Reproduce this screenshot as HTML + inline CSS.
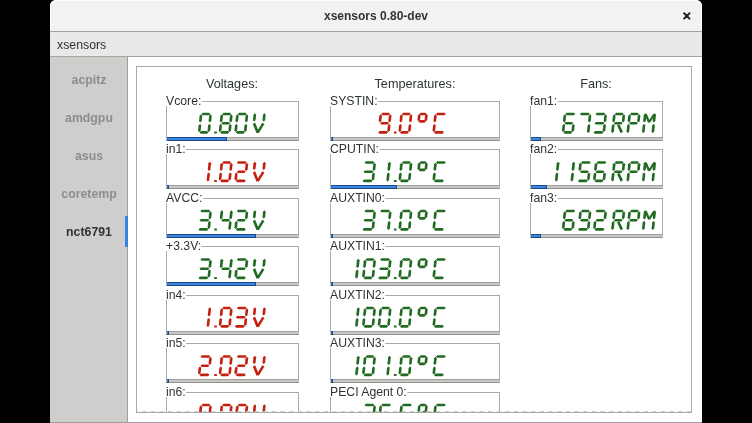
<!DOCTYPE html>
<html><head><meta charset="utf-8"><style>
html,body{margin:0;padding:0;width:752px;height:423px;overflow:hidden;background:#000;font-family:"Liberation Sans",sans-serif;}
.win{will-change:transform;position:absolute;left:50px;top:0;width:652px;height:423px;background:#fff;border-radius:6px 6px 0 0;overflow:hidden;}
.title{position:absolute;left:0;top:0;width:652px;height:31px;background:#f2f2f2;border-bottom:1px solid #a2a29f;box-shadow:inset 1px 0 #fff,inset -1px 0 #fff,inset 0 1px #fff;border-radius:6px 6px 0 0;}
.title .t{position:absolute;left:0;width:652px;top:9px;text-align:center;font-weight:bold;font-size:12px;color:#2e3436;}
.title .x{position:absolute;left:632px;top:12px;width:8px;height:8px;}
.menu{position:absolute;left:0;top:32px;width:652px;height:24px;background:#e8e8e7;border-bottom:1px solid #a5a5a2;}
.menu .t{position:absolute;left:7px;top:5.3px;font-size:13.6px;color:#2e3436;transform:scaleX(0.905);transform-origin:0 0;}
.side{position:absolute;left:0;top:57px;width:77px;height:366px;background:#cececc;border-right:1px solid #9f9f9c;}
.side .it{position:absolute;left:0;width:78px;text-align:center;font-weight:bold;font-size:12.3px;color:#8b8e8f;}
.side .sel{color:#2e3436;}
.side .ind{position:absolute;left:75px;top:159px;width:3px;height:31px;background:#3584e4;}
.content{position:absolute;left:136px;top:66px;width:554px;height:345px;border:1px solid #a8a8a5;overflow:hidden;background:#fff;}
.fr{position:absolute;height:38px;border:1px solid #a9a9a6;}
.lb{position:absolute;left:-1px;top:-5.9px;background:#fff;font-size:12.8px;color:#2e3436;padding-right:0.6px;line-height:10.5px;height:10.1px;transform:scaleX(0.955);transform-origin:0 0;}
.bar{position:absolute;left:-1px;right:-1px;bottom:-1px;height:4px;background:#c8c8c5;box-shadow:inset 0 1px #a0a09c, inset 0 -1px #92928e;border-radius:0 0 1px 1px;}
.fill{position:absolute;left:1px;top:0;height:4px;background:#3a88e2;box-shadow:inset 0 1px #174a90, inset 0 -1px #1d4778, inset -1px 0 #174a90;border-radius:1px;}
.hd{position:absolute;font-size:12.8px;color:#2e3436;top:76px;width:200px;text-align:center;transform:scaleX(0.99);}
.dash{position:absolute;left:137px;top:411px;width:554px;height:1px;background:repeating-linear-gradient(to right,#fff 0,#fff 4.3px,#c8c8c8 4.3px,#c8c8c8 8.67px);}
.bottom{position:absolute;left:50px;top:422px;width:652px;height:1px;background:#a0a09e;}
</style></head><body>
<div class="win">
 <div class="title"><div class="t">xsensors 0.80-dev</div>
  <svg viewBox="0 0 10 10" style="left:631.5px;top:10.5px;width:10px;height:10px;position:absolute"><path d="M2.1 2.2L7.5 7.6M7.5 2.2L2.1 7.6" stroke="#1f2324" stroke-width="2" stroke-linecap="round"/></svg>
 </div>
 <div class="menu"><div class="t">xsensors</div></div>
 <div class="side">
  <div class="it" style="top:16px">acpitz</div>
  <div class="it" style="top:54px">amdgpu</div>
  <div class="it" style="top:92px">asus</div>
  <div class="it" style="top:130px">coretemp</div>
  <div class="it sel" style="top:168px">nct6791</div>
  <div class="ind"></div>
 </div>
</div>
<div style="position:absolute;left:0;top:0;width:752px;height:423px;will-change:transform;">
 <div style="position:absolute;left:137px;top:67px;width:554px;height:345px;overflow:hidden;">
  <div style="position:absolute;left:-137px;top:-67px;width:752px;height:423px;">
   <div class="hd" style="left:132.3px">Voltages:</div>
   <div class="hd" style="left:314.5px">Temperatures:</div>
   <div class="hd" style="left:496.4px">Fans:</div>
   <div class="fr" style="left:166px;top:101px;width:131px"><span class="lb">Vcore:</span><div class="bar"><div class="fill" style="width:59.5px"></div></div></div><div class="fr" style="left:166px;top:149px;width:131px"><span class="lb">in1:</span><div class="bar"><div class="fill" style="width:2.0px"></div></div></div><div class="fr" style="left:166px;top:198px;width:131px"><span class="lb">AVCC:</span><div class="bar"><div class="fill" style="width:89.4px"></div></div></div><div class="fr" style="left:166px;top:246px;width:131px"><span class="lb">+3.3V:</span><div class="bar"><div class="fill" style="width:89.4px"></div></div></div><div class="fr" style="left:166px;top:295px;width:131px"><span class="lb">in4:</span><div class="bar"><div class="fill" style="width:2.0px"></div></div></div><div class="fr" style="left:166px;top:343px;width:131px"><span class="lb">in5:</span><div class="bar"><div class="fill" style="width:2.0px"></div></div></div><div class="fr" style="left:166px;top:392px;width:131px"><span class="lb">in6:</span><div class="bar"><div class="fill" style="width:2.0px"></div></div></div><div class="fr" style="left:330px;top:101px;width:168px"><span class="lb">SYSTIN:</span><div class="bar"><div class="fill" style="width:2.0px"></div></div></div><div class="fr" style="left:330px;top:149px;width:168px"><span class="lb">CPUTIN:</span><div class="bar"><div class="fill" style="width:65.5px"></div></div></div><div class="fr" style="left:330px;top:198px;width:168px"><span class="lb">AUXTIN0:</span><div class="bar"><div class="fill" style="width:2.0px"></div></div></div><div class="fr" style="left:330px;top:246px;width:168px"><span class="lb">AUXTIN1:</span><div class="bar"><div class="fill" style="width:2.0px"></div></div></div><div class="fr" style="left:330px;top:295px;width:168px"><span class="lb">AUXTIN2:</span><div class="bar"><div class="fill" style="width:2.0px"></div></div></div><div class="fr" style="left:330px;top:343px;width:168px"><span class="lb">AUXTIN3:</span><div class="bar"><div class="fill" style="width:2.0px"></div></div></div><div class="fr" style="left:330px;top:392px;width:168px"><span class="lb">PECI Agent 0:</span><div class="bar"><div class="fill" style="width:2.0px"></div></div></div><div class="fr" style="left:530px;top:101px;width:131px"><span class="lb">fan1:</span><div class="bar"><div class="fill" style="width:9.9px"></div></div></div><div class="fr" style="left:530px;top:149px;width:131px"><span class="lb">fan2:</span><div class="bar"><div class="fill" style="width:15.7px"></div></div></div><div class="fr" style="left:530px;top:198px;width:131px"><span class="lb">fan3:</span><div class="bar"><div class="fill" style="width:9.8px"></div></div></div>
   <svg style="position:absolute;left:0;top:0" width="752" height="423"><g fill="#226a22"><polygon points="254.96,113.35 256.15,114.67 255.56,120.28 254.10,121.60 252.91,120.28 253.50,114.67"/><polygon points="264.51,113.35 265.70,114.67 265.11,120.28 263.65,121.60 262.46,120.28 263.05,114.67"/><polygon points="252.82,123.97 256.53,133.17 258.90,132.03 255.19,122.83"/><polygon points="262.29,122.83 256.65,132.03 258.78,133.17 264.42,123.97"/><polygon points="237.82,114.03 239.28,112.70 245.53,112.70 246.72,114.03 245.25,115.35 239.00,115.35"/><polygon points="235.89,132.38 237.35,131.05 243.60,131.05 244.79,132.38 243.33,133.70 237.08,133.70"/><polygon points="237.46,114.35 238.64,115.67 238.08,121.08 236.61,122.40 235.43,121.08 235.99,115.67"/><polygon points="236.44,124.00 237.63,125.33 237.06,130.72 235.60,132.05 234.41,130.72 234.98,125.33"/><polygon points="247.01,114.35 248.19,115.67 247.63,121.08 246.16,122.40 244.98,121.08 245.54,115.67"/><polygon points="245.99,124.00 247.18,125.33 246.61,130.72 245.15,132.05 243.96,130.72 244.53,125.33"/><polygon points="222.22,114.03 223.68,112.70 229.93,112.70 231.12,114.03 229.65,115.35 223.40,115.35"/><polygon points="221.25,123.20 222.72,121.88 228.97,121.88 230.15,123.20 228.69,124.53 222.44,124.53"/><polygon points="220.29,132.38 221.75,131.05 228.00,131.05 229.19,132.38 227.73,133.70 221.48,133.70"/><polygon points="221.86,114.35 223.04,115.67 222.48,121.08 221.01,122.40 219.83,121.08 220.39,115.67"/><polygon points="220.84,124.00 222.03,125.33 221.46,130.72 220.00,132.05 218.81,130.72 219.38,125.33"/><polygon points="231.41,114.35 232.59,115.67 232.03,121.08 230.56,122.40 229.38,121.08 229.94,115.67"/><polygon points="230.39,124.00 231.58,125.33 231.01,130.72 229.55,132.05 228.36,130.72 228.93,125.33"/><rect x="214.20" y="131.40" width="2.7" height="2.2" rx="0.4" fill="#226a22"/><polygon points="201.42,114.03 202.88,112.70 209.13,112.70 210.32,114.03 208.85,115.35 202.60,115.35"/><polygon points="199.49,132.38 200.95,131.05 207.20,131.05 208.39,132.38 206.93,133.70 200.68,133.70"/><polygon points="201.06,114.35 202.24,115.67 201.68,121.08 200.21,122.40 199.03,121.08 199.59,115.67"/><polygon points="200.04,124.00 201.23,125.33 200.66,130.72 199.20,132.05 198.01,130.72 198.58,125.33"/><polygon points="210.61,114.35 211.79,115.67 211.23,121.08 209.76,122.40 208.58,121.08 209.14,115.67"/><polygon points="209.59,124.00 210.78,125.33 210.21,130.72 208.75,132.05 207.56,130.72 208.13,125.33"/></g><g fill="#c42010"><polygon points="254.96,161.85 256.15,163.17 255.56,168.77 254.10,170.10 252.91,168.77 253.50,163.17"/><polygon points="264.51,161.85 265.70,163.17 265.11,168.77 263.65,170.10 262.46,168.77 263.05,163.17"/><polygon points="252.82,172.47 256.53,181.67 258.90,180.53 255.19,171.33"/><polygon points="262.29,171.33 256.65,180.53 258.78,181.67 264.42,172.47"/><polygon points="236.82,162.52 238.28,161.20 245.53,161.20 246.72,162.52 245.25,163.85 238.00,163.85"/><polygon points="236.85,171.70 238.32,170.38 244.57,170.38 245.75,171.70 244.29,173.02 238.04,173.02"/><polygon points="235.89,180.88 237.35,179.55 244.60,179.55 245.79,180.88 244.33,182.20 237.08,182.20"/><polygon points="236.44,172.50 237.63,173.82 237.06,179.22 235.60,180.55 234.41,179.22 234.98,173.82"/><polygon points="247.01,162.85 248.19,164.17 247.63,169.57 246.16,170.90 244.98,169.57 245.54,164.17"/><polygon points="222.22,162.52 223.68,161.20 229.93,161.20 231.12,162.52 229.65,163.85 223.40,163.85"/><polygon points="220.29,180.88 221.75,179.55 228.00,179.55 229.19,180.88 227.73,182.20 221.48,182.20"/><polygon points="221.86,162.85 223.04,164.17 222.48,169.57 221.01,170.90 219.83,169.57 220.39,164.17"/><polygon points="220.84,172.50 222.03,173.82 221.46,179.22 220.00,180.55 218.81,179.22 219.38,173.82"/><polygon points="231.41,162.85 232.59,164.17 232.03,169.57 230.56,170.90 229.38,169.57 229.94,164.17"/><polygon points="230.39,172.50 231.58,173.82 231.01,179.22 229.55,180.55 228.36,179.22 228.93,173.82"/><rect x="214.20" y="179.90" width="2.7" height="2.2" rx="0.4" fill="#c42010"/><polygon points="209.91,161.85 211.10,163.17 210.43,169.57 208.96,170.90 207.78,169.57 208.45,163.17"/><polygon points="208.79,172.50 209.98,173.82 209.31,180.22 207.84,181.55 206.66,180.22 207.33,173.82"/></g><g fill="#226a22"><polygon points="254.96,210.35 256.15,211.67 255.56,217.27 254.10,218.60 252.91,217.27 253.50,211.67"/><polygon points="264.51,210.35 265.70,211.67 265.11,217.27 263.65,218.60 262.46,217.27 263.05,211.67"/><polygon points="252.82,220.97 256.53,230.17 258.90,229.03 255.19,219.83"/><polygon points="262.29,219.83 256.65,229.03 258.78,230.17 264.42,220.97"/><polygon points="236.82,211.02 238.28,209.70 245.53,209.70 246.72,211.02 245.25,212.35 238.00,212.35"/><polygon points="236.85,220.20 238.32,218.88 244.57,218.88 245.75,220.20 244.29,221.52 238.04,221.52"/><polygon points="235.89,229.38 237.35,228.05 244.60,228.05 245.79,229.38 244.33,230.70 237.08,230.70"/><polygon points="236.44,221.00 237.63,222.32 237.06,227.72 235.60,229.05 234.41,227.72 234.98,222.32"/><polygon points="247.01,211.35 248.19,212.67 247.63,218.07 246.16,219.40 244.98,218.07 245.54,212.67"/><polygon points="221.25,220.20 222.72,218.88 228.97,218.88 230.15,220.20 228.69,221.52 222.44,221.52"/><polygon points="221.96,210.35 223.15,211.67 222.48,218.07 221.01,219.40 219.83,218.07 220.50,211.67"/><polygon points="231.51,210.35 232.70,211.67 232.03,218.07 230.56,219.40 229.38,218.07 230.05,211.67"/><polygon points="230.39,221.00 231.58,222.32 230.91,228.72 229.44,230.05 228.26,228.72 228.93,222.32"/><rect x="214.20" y="228.40" width="2.7" height="2.2" rx="0.4" fill="#226a22"/><polygon points="200.42,211.02 201.88,209.70 209.13,209.70 210.32,211.02 208.85,212.35 201.60,212.35"/><polygon points="199.45,220.20 200.92,218.88 208.17,218.88 209.35,220.20 207.89,221.52 200.64,221.52"/><polygon points="198.49,229.38 199.95,228.05 207.20,228.05 208.39,229.38 206.93,230.70 199.68,230.70"/><polygon points="210.61,211.35 211.79,212.67 211.23,218.07 209.76,219.40 208.58,218.07 209.14,212.67"/><polygon points="209.59,221.00 210.78,222.32 210.21,227.72 208.75,229.05 207.56,227.72 208.13,222.32"/></g><g fill="#226a22"><polygon points="254.96,258.85 256.15,260.18 255.56,265.77 254.10,267.10 252.91,265.77 253.50,260.18"/><polygon points="264.51,258.85 265.70,260.18 265.11,265.77 263.65,267.10 262.46,265.77 263.05,260.18"/><polygon points="252.82,269.47 256.53,278.67 258.90,277.53 255.19,268.33"/><polygon points="262.29,268.33 256.65,277.53 258.78,278.67 264.42,269.47"/><polygon points="236.82,259.52 238.28,258.20 245.53,258.20 246.72,259.52 245.25,260.85 238.00,260.85"/><polygon points="236.85,268.70 238.32,267.38 244.57,267.38 245.75,268.70 244.29,270.02 238.04,270.02"/><polygon points="235.89,277.88 237.35,276.55 244.60,276.55 245.79,277.88 244.33,279.20 237.08,279.20"/><polygon points="236.44,269.50 237.63,270.82 237.06,276.22 235.60,277.55 234.41,276.22 234.98,270.82"/><polygon points="247.01,259.85 248.19,261.18 247.63,266.57 246.16,267.90 244.98,266.57 245.54,261.18"/><polygon points="221.25,268.70 222.72,267.38 228.97,267.38 230.15,268.70 228.69,270.02 222.44,270.02"/><polygon points="221.96,258.85 223.15,260.18 222.48,266.57 221.01,267.90 219.83,266.57 220.50,260.18"/><polygon points="231.51,258.85 232.70,260.18 232.03,266.57 230.56,267.90 229.38,266.57 230.05,260.18"/><polygon points="230.39,269.50 231.58,270.82 230.91,277.22 229.44,278.55 228.26,277.22 228.93,270.82"/><rect x="214.20" y="276.90" width="2.7" height="2.2" rx="0.4" fill="#226a22"/><polygon points="200.42,259.52 201.88,258.20 209.13,258.20 210.32,259.52 208.85,260.85 201.60,260.85"/><polygon points="199.45,268.70 200.92,267.38 208.17,267.38 209.35,268.70 207.89,270.02 200.64,270.02"/><polygon points="198.49,277.88 199.95,276.55 207.20,276.55 208.39,277.88 206.93,279.20 199.68,279.20"/><polygon points="210.61,259.85 211.79,261.18 211.23,266.57 209.76,267.90 208.58,266.57 209.14,261.18"/><polygon points="209.59,269.50 210.78,270.82 210.21,276.22 208.75,277.55 207.56,276.22 208.13,270.82"/></g><g fill="#c42010"><polygon points="254.96,307.35 256.15,308.68 255.56,314.27 254.10,315.60 252.91,314.27 253.50,308.68"/><polygon points="264.51,307.35 265.70,308.68 265.11,314.27 263.65,315.60 262.46,314.27 263.05,308.68"/><polygon points="252.82,317.97 256.53,327.17 258.90,326.03 255.19,316.83"/><polygon points="262.29,316.83 256.65,326.03 258.78,327.17 264.42,317.97"/><polygon points="236.82,308.02 238.28,306.70 245.53,306.70 246.72,308.02 245.25,309.35 238.00,309.35"/><polygon points="235.85,317.20 237.32,315.88 244.57,315.88 245.75,317.20 244.29,318.52 237.04,318.52"/><polygon points="234.89,326.38 236.35,325.05 243.60,325.05 244.79,326.38 243.33,327.70 236.08,327.70"/><polygon points="247.01,308.35 248.19,309.68 247.63,315.07 246.16,316.40 244.98,315.07 245.54,309.68"/><polygon points="245.99,318.00 247.18,319.32 246.61,324.72 245.15,326.05 243.96,324.72 244.53,319.32"/><polygon points="222.22,308.02 223.68,306.70 229.93,306.70 231.12,308.02 229.65,309.35 223.40,309.35"/><polygon points="220.29,326.38 221.75,325.05 228.00,325.05 229.19,326.38 227.73,327.70 221.48,327.70"/><polygon points="221.86,308.35 223.04,309.68 222.48,315.07 221.01,316.40 219.83,315.07 220.39,309.68"/><polygon points="220.84,318.00 222.03,319.32 221.46,324.72 220.00,326.05 218.81,324.72 219.38,319.32"/><polygon points="231.41,308.35 232.59,309.68 232.03,315.07 230.56,316.40 229.38,315.07 229.94,309.68"/><polygon points="230.39,318.00 231.58,319.32 231.01,324.72 229.55,326.05 228.36,324.72 228.93,319.32"/><rect x="214.20" y="325.40" width="2.7" height="2.2" rx="0.4" fill="#c42010"/><polygon points="209.91,307.35 211.10,308.68 210.43,315.07 208.96,316.40 207.78,315.07 208.45,308.68"/><polygon points="208.79,318.00 209.98,319.32 209.31,325.72 207.84,327.05 206.66,325.72 207.33,319.32"/></g><g fill="#c42010"><polygon points="254.96,355.85 256.15,357.18 255.56,362.77 254.10,364.10 252.91,362.77 253.50,357.18"/><polygon points="264.51,355.85 265.70,357.18 265.11,362.77 263.65,364.10 262.46,362.77 263.05,357.18"/><polygon points="252.82,366.47 256.53,375.67 258.90,374.53 255.19,365.33"/><polygon points="262.29,365.33 256.65,374.53 258.78,375.67 264.42,366.47"/><polygon points="236.82,356.52 238.28,355.20 245.53,355.20 246.72,356.52 245.25,357.85 238.00,357.85"/><polygon points="236.85,365.70 238.32,364.38 244.57,364.38 245.75,365.70 244.29,367.02 238.04,367.02"/><polygon points="235.89,374.88 237.35,373.55 244.60,373.55 245.79,374.88 244.33,376.20 237.08,376.20"/><polygon points="236.44,366.50 237.63,367.82 237.06,373.22 235.60,374.55 234.41,373.22 234.98,367.82"/><polygon points="247.01,356.85 248.19,358.18 247.63,363.57 246.16,364.90 244.98,363.57 245.54,358.18"/><polygon points="222.22,356.52 223.68,355.20 229.93,355.20 231.12,356.52 229.65,357.85 223.40,357.85"/><polygon points="220.29,374.88 221.75,373.55 228.00,373.55 229.19,374.88 227.73,376.20 221.48,376.20"/><polygon points="221.86,356.85 223.04,358.18 222.48,363.57 221.01,364.90 219.83,363.57 220.39,358.18"/><polygon points="220.84,366.50 222.03,367.82 221.46,373.22 220.00,374.55 218.81,373.22 219.38,367.82"/><polygon points="231.41,356.85 232.59,358.18 232.03,363.57 230.56,364.90 229.38,363.57 229.94,358.18"/><polygon points="230.39,366.50 231.58,367.82 231.01,373.22 229.55,374.55 228.36,373.22 228.93,367.82"/><rect x="214.20" y="373.90" width="2.7" height="2.2" rx="0.4" fill="#c42010"/><polygon points="200.42,356.52 201.88,355.20 209.13,355.20 210.32,356.52 208.85,357.85 201.60,357.85"/><polygon points="200.45,365.70 201.92,364.38 208.17,364.38 209.35,365.70 207.89,367.02 201.64,367.02"/><polygon points="199.49,374.88 200.95,373.55 208.20,373.55 209.39,374.88 207.93,376.20 200.68,376.20"/><polygon points="200.04,366.50 201.23,367.82 200.66,373.22 199.20,374.55 198.01,373.22 198.58,367.82"/><polygon points="210.61,356.85 211.79,358.18 211.23,363.57 209.76,364.90 208.58,363.57 209.14,358.18"/></g><g fill="#c42010"><polygon points="254.96,404.35 256.15,405.68 255.56,411.27 254.10,412.60 252.91,411.27 253.50,405.68"/><polygon points="264.51,404.35 265.70,405.68 265.11,411.27 263.65,412.60 262.46,411.27 263.05,405.68"/><polygon points="252.82,414.97 256.53,424.17 258.90,423.03 255.19,413.83"/><polygon points="262.29,413.83 256.65,423.03 258.78,424.17 264.42,414.97"/><polygon points="237.82,405.02 239.28,403.70 245.53,403.70 246.72,405.02 245.25,406.35 239.00,406.35"/><polygon points="235.89,423.38 237.35,422.05 243.60,422.05 244.79,423.38 243.33,424.70 237.08,424.70"/><polygon points="237.46,405.35 238.64,406.68 238.08,412.07 236.61,413.40 235.43,412.07 235.99,406.68"/><polygon points="236.44,415.00 237.63,416.32 237.06,421.72 235.60,423.05 234.41,421.72 234.98,416.32"/><polygon points="247.01,405.35 248.19,406.68 247.63,412.07 246.16,413.40 244.98,412.07 245.54,406.68"/><polygon points="245.99,415.00 247.18,416.32 246.61,421.72 245.15,423.05 243.96,421.72 244.53,416.32"/><polygon points="222.22,405.02 223.68,403.70 229.93,403.70 231.12,405.02 229.65,406.35 223.40,406.35"/><polygon points="220.29,423.38 221.75,422.05 228.00,422.05 229.19,423.38 227.73,424.70 221.48,424.70"/><polygon points="221.86,405.35 223.04,406.68 222.48,412.07 221.01,413.40 219.83,412.07 220.39,406.68"/><polygon points="220.84,415.00 222.03,416.32 221.46,421.72 220.00,423.05 218.81,421.72 219.38,416.32"/><polygon points="231.41,405.35 232.59,406.68 232.03,412.07 230.56,413.40 229.38,412.07 229.94,406.68"/><polygon points="230.39,415.00 231.58,416.32 231.01,421.72 229.55,423.05 228.36,421.72 228.93,416.32"/><rect x="214.20" y="422.40" width="2.7" height="2.2" rx="0.4" fill="#c42010"/><polygon points="201.42,405.02 202.88,403.70 209.13,403.70 210.32,405.02 208.85,406.35 202.60,406.35"/><polygon points="199.49,423.38 200.95,422.05 207.20,422.05 208.39,423.38 206.93,424.70 200.68,424.70"/><polygon points="201.06,405.35 202.24,406.68 201.68,412.07 200.21,413.40 199.03,412.07 199.59,406.68"/><polygon points="200.04,415.00 201.23,416.32 200.66,421.72 199.20,423.05 198.01,421.72 198.58,416.32"/><polygon points="210.61,405.35 211.79,406.68 211.23,412.07 209.76,413.40 208.58,412.07 209.14,406.68"/><polygon points="209.59,415.00 210.78,416.32 210.21,421.72 208.75,423.05 207.56,421.72 208.13,416.32"/></g><g fill="#c42010"><polygon points="435.92,114.03 437.38,112.70 444.63,112.70 445.82,114.03 444.35,115.35 437.10,115.35"/><polygon points="433.99,132.38 435.45,131.05 442.70,131.05 443.89,132.38 442.43,133.70 435.18,133.70"/><polygon points="435.56,114.35 436.74,115.67 436.18,121.08 434.71,122.40 433.53,121.08 434.09,115.67"/><polygon points="434.54,124.00 435.73,125.33 435.16,130.72 433.70,132.05 432.51,130.72 433.08,125.33"/><polygon points="419.37,114.03 420.83,112.70 425.38,112.70 426.57,114.03 425.10,115.35 420.55,115.35"/><polygon points="418.59,121.38 420.06,120.05 424.61,120.05 425.79,121.38 424.33,122.70 419.78,122.70"/><polygon points="419.39,114.00 420.58,115.33 420.08,120.08 418.62,121.40 417.43,120.08 417.93,115.33"/><polygon points="426.54,114.00 427.73,115.33 427.23,120.08 425.77,121.40 424.58,120.08 425.08,115.33"/><polygon points="401.92,114.03 403.38,112.70 409.63,112.70 410.82,114.03 409.35,115.35 403.10,115.35"/><polygon points="399.99,132.38 401.45,131.05 407.70,131.05 408.89,132.38 407.42,133.70 401.17,133.70"/><polygon points="401.56,114.35 402.74,115.67 402.18,121.08 400.71,122.40 399.53,121.08 400.09,115.67"/><polygon points="400.54,124.00 401.73,125.33 401.16,130.72 399.70,132.05 398.51,130.72 399.08,125.33"/><polygon points="411.11,114.35 412.29,115.67 411.73,121.08 410.26,122.40 409.08,121.08 409.64,115.67"/><polygon points="410.09,124.00 411.28,125.33 410.71,130.72 409.25,132.05 408.06,130.72 408.63,125.33"/><rect x="393.90" y="131.40" width="2.7" height="2.2" rx="0.4" fill="#c42010"/><polygon points="381.12,114.03 382.58,112.70 388.83,112.70 390.02,114.03 388.55,115.35 382.30,115.35"/><polygon points="380.15,123.20 381.62,121.88 387.87,121.88 389.05,123.20 387.59,124.53 381.34,124.53"/><polygon points="378.19,132.38 379.65,131.05 386.90,131.05 388.09,132.38 386.62,133.70 379.37,133.70"/><polygon points="380.76,114.35 381.94,115.67 381.38,121.08 379.91,122.40 378.73,121.08 379.29,115.67"/><polygon points="390.31,114.35 391.49,115.67 390.93,121.08 389.46,122.40 388.28,121.08 388.84,115.67"/><polygon points="389.29,124.00 390.48,125.33 389.91,130.72 388.45,132.05 387.26,130.72 387.83,125.33"/></g><g fill="#226a22"><polygon points="435.92,162.52 437.38,161.20 444.63,161.20 445.82,162.52 444.35,163.85 437.10,163.85"/><polygon points="433.99,180.88 435.45,179.55 442.70,179.55 443.89,180.88 442.43,182.20 435.18,182.20"/><polygon points="435.56,162.85 436.74,164.17 436.18,169.57 434.71,170.90 433.53,169.57 434.09,164.17"/><polygon points="434.54,172.50 435.73,173.82 435.16,179.22 433.70,180.55 432.51,179.22 433.08,173.82"/><polygon points="419.37,162.52 420.83,161.20 425.38,161.20 426.57,162.52 425.10,163.85 420.55,163.85"/><polygon points="418.59,169.88 420.06,168.55 424.61,168.55 425.79,169.88 424.33,171.20 419.78,171.20"/><polygon points="419.39,162.50 420.58,163.82 420.08,168.57 418.62,169.90 417.43,168.57 417.93,163.82"/><polygon points="426.54,162.50 427.73,163.82 427.23,168.57 425.77,169.90 424.58,168.57 425.08,163.82"/><polygon points="401.92,162.52 403.38,161.20 409.63,161.20 410.82,162.52 409.35,163.85 403.10,163.85"/><polygon points="399.99,180.88 401.45,179.55 407.70,179.55 408.89,180.88 407.42,182.20 401.17,182.20"/><polygon points="401.56,162.85 402.74,164.17 402.18,169.57 400.71,170.90 399.53,169.57 400.09,164.17"/><polygon points="400.54,172.50 401.73,173.82 401.16,179.22 399.70,180.55 398.51,179.22 399.08,173.82"/><polygon points="411.11,162.85 412.29,164.17 411.73,169.57 410.26,170.90 409.08,169.57 409.64,164.17"/><polygon points="410.09,172.50 411.28,173.82 410.71,179.22 409.25,180.55 408.06,179.22 408.63,173.82"/><rect x="393.90" y="179.90" width="2.7" height="2.2" rx="0.4" fill="#226a22"/><polygon points="389.61,161.85 390.80,163.17 390.13,169.57 388.66,170.90 387.48,169.57 388.15,163.17"/><polygon points="388.49,172.50 389.68,173.82 389.01,180.22 387.54,181.55 386.36,180.22 387.03,173.82"/><polygon points="364.52,162.52 365.98,161.20 373.23,161.20 374.42,162.52 372.95,163.85 365.70,163.85"/><polygon points="363.55,171.70 365.02,170.38 372.27,170.38 373.45,171.70 371.99,173.02 364.74,173.02"/><polygon points="362.59,180.88 364.05,179.55 371.30,179.55 372.49,180.88 371.02,182.20 363.77,182.20"/><polygon points="374.71,162.85 375.89,164.17 375.33,169.57 373.86,170.90 372.68,169.57 373.24,164.17"/><polygon points="373.69,172.50 374.88,173.82 374.31,179.22 372.85,180.55 371.66,179.22 372.23,173.82"/></g><g fill="#226a22"><polygon points="435.92,211.02 437.38,209.70 444.63,209.70 445.82,211.02 444.35,212.35 437.10,212.35"/><polygon points="433.99,229.38 435.45,228.05 442.70,228.05 443.89,229.38 442.43,230.70 435.18,230.70"/><polygon points="435.56,211.35 436.74,212.67 436.18,218.07 434.71,219.40 433.53,218.07 434.09,212.67"/><polygon points="434.54,221.00 435.73,222.32 435.16,227.72 433.70,229.05 432.51,227.72 433.08,222.32"/><polygon points="419.37,211.02 420.83,209.70 425.38,209.70 426.57,211.02 425.10,212.35 420.55,212.35"/><polygon points="418.59,218.38 420.06,217.05 424.61,217.05 425.79,218.38 424.33,219.70 419.78,219.70"/><polygon points="419.39,211.00 420.58,212.32 420.08,217.07 418.62,218.40 417.43,217.07 417.93,212.32"/><polygon points="426.54,211.00 427.73,212.32 427.23,217.07 425.77,218.40 424.58,217.07 425.08,212.32"/><polygon points="401.92,211.02 403.38,209.70 409.63,209.70 410.82,211.02 409.35,212.35 403.10,212.35"/><polygon points="399.99,229.38 401.45,228.05 407.70,228.05 408.89,229.38 407.42,230.70 401.17,230.70"/><polygon points="401.56,211.35 402.74,212.67 402.18,218.07 400.71,219.40 399.53,218.07 400.09,212.67"/><polygon points="400.54,221.00 401.73,222.32 401.16,227.72 399.70,229.05 398.51,227.72 399.08,222.32"/><polygon points="411.11,211.35 412.29,212.67 411.73,218.07 410.26,219.40 409.08,218.07 409.64,212.67"/><polygon points="410.09,221.00 411.28,222.32 410.71,227.72 409.25,229.05 408.06,227.72 408.63,222.32"/><rect x="393.90" y="228.40" width="2.7" height="2.2" rx="0.4" fill="#226a22"/><polygon points="380.12,211.02 381.58,209.70 388.83,209.70 390.02,211.02 388.55,212.35 381.30,212.35"/><polygon points="390.31,211.35 391.49,212.67 390.93,218.07 389.46,219.40 388.28,218.07 388.84,212.67"/><polygon points="389.29,221.00 390.48,222.32 389.81,228.72 388.34,230.05 387.16,228.72 387.83,222.32"/><polygon points="364.52,211.02 365.98,209.70 373.23,209.70 374.42,211.02 372.95,212.35 365.70,212.35"/><polygon points="363.55,220.20 365.02,218.88 372.27,218.88 373.45,220.20 371.99,221.52 364.74,221.52"/><polygon points="362.59,229.38 364.05,228.05 371.30,228.05 372.49,229.38 371.02,230.70 363.77,230.70"/><polygon points="374.71,211.35 375.89,212.67 375.33,218.07 373.86,219.40 372.68,218.07 373.24,212.67"/><polygon points="373.69,221.00 374.88,222.32 374.31,227.72 372.85,229.05 371.66,227.72 372.23,222.32"/></g><g fill="#226a22"><polygon points="435.92,259.52 437.38,258.20 444.63,258.20 445.82,259.52 444.35,260.85 437.10,260.85"/><polygon points="433.99,277.88 435.45,276.55 442.70,276.55 443.89,277.88 442.43,279.20 435.18,279.20"/><polygon points="435.56,259.85 436.74,261.18 436.18,266.57 434.71,267.90 433.53,266.57 434.09,261.18"/><polygon points="434.54,269.50 435.73,270.82 435.16,276.22 433.70,277.55 432.51,276.22 433.08,270.82"/><polygon points="419.37,259.52 420.83,258.20 425.38,258.20 426.57,259.52 425.10,260.85 420.55,260.85"/><polygon points="418.59,266.88 420.06,265.55 424.61,265.55 425.79,266.88 424.33,268.20 419.78,268.20"/><polygon points="419.39,259.50 420.58,260.82 420.08,265.57 418.62,266.90 417.43,265.57 417.93,260.82"/><polygon points="426.54,259.50 427.73,260.82 427.23,265.57 425.77,266.90 424.58,265.57 425.08,260.82"/><polygon points="401.92,259.52 403.38,258.20 409.63,258.20 410.82,259.52 409.35,260.85 403.10,260.85"/><polygon points="399.99,277.88 401.45,276.55 407.70,276.55 408.89,277.88 407.42,279.20 401.17,279.20"/><polygon points="401.56,259.85 402.74,261.18 402.18,266.57 400.71,267.90 399.53,266.57 400.09,261.18"/><polygon points="400.54,269.50 401.73,270.82 401.16,276.22 399.70,277.55 398.51,276.22 399.08,270.82"/><polygon points="411.11,259.85 412.29,261.18 411.73,266.57 410.26,267.90 409.08,266.57 409.64,261.18"/><polygon points="410.09,269.50 411.28,270.82 410.71,276.22 409.25,277.55 408.06,276.22 408.63,270.82"/><rect x="393.90" y="276.90" width="2.7" height="2.2" rx="0.4" fill="#226a22"/><polygon points="380.12,259.52 381.58,258.20 388.83,258.20 390.02,259.52 388.55,260.85 381.30,260.85"/><polygon points="379.15,268.70 380.62,267.38 387.87,267.38 389.05,268.70 387.59,270.02 380.34,270.02"/><polygon points="378.19,277.88 379.65,276.55 386.90,276.55 388.09,277.88 386.62,279.20 379.37,279.20"/><polygon points="390.31,259.85 391.49,261.18 390.93,266.57 389.46,267.90 388.28,266.57 388.84,261.18"/><polygon points="389.29,269.50 390.48,270.82 389.91,276.22 388.45,277.55 387.26,276.22 387.83,270.82"/><polygon points="365.52,259.52 366.98,258.20 373.23,258.20 374.42,259.52 372.95,260.85 366.70,260.85"/><polygon points="363.59,277.88 365.05,276.55 371.30,276.55 372.49,277.88 371.02,279.20 364.77,279.20"/><polygon points="365.16,259.85 366.34,261.18 365.78,266.57 364.31,267.90 363.13,266.57 363.69,261.18"/><polygon points="364.14,269.50 365.33,270.82 364.76,276.22 363.30,277.55 362.11,276.22 362.68,270.82"/><polygon points="374.71,259.85 375.89,261.18 375.33,266.57 373.86,267.90 372.68,266.57 373.24,261.18"/><polygon points="373.69,269.50 374.88,270.82 374.31,276.22 372.85,277.55 371.66,276.22 372.23,270.82"/><polygon points="358.41,258.85 359.60,260.18 358.93,266.57 357.46,267.90 356.28,266.57 356.95,260.18"/><polygon points="357.29,269.50 358.48,270.82 357.81,277.22 356.34,278.55 355.16,277.22 355.83,270.82"/></g><g fill="#226a22"><polygon points="435.92,308.02 437.38,306.70 444.63,306.70 445.82,308.02 444.35,309.35 437.10,309.35"/><polygon points="433.99,326.38 435.45,325.05 442.70,325.05 443.89,326.38 442.43,327.70 435.18,327.70"/><polygon points="435.56,308.35 436.74,309.68 436.18,315.07 434.71,316.40 433.53,315.07 434.09,309.68"/><polygon points="434.54,318.00 435.73,319.32 435.16,324.72 433.70,326.05 432.51,324.72 433.08,319.32"/><polygon points="419.37,308.02 420.83,306.70 425.38,306.70 426.57,308.02 425.10,309.35 420.55,309.35"/><polygon points="418.59,315.38 420.06,314.05 424.61,314.05 425.79,315.38 424.33,316.70 419.78,316.70"/><polygon points="419.39,308.00 420.58,309.32 420.08,314.07 418.62,315.40 417.43,314.07 417.93,309.32"/><polygon points="426.54,308.00 427.73,309.32 427.23,314.07 425.77,315.40 424.58,314.07 425.08,309.32"/><polygon points="401.92,308.02 403.38,306.70 409.63,306.70 410.82,308.02 409.35,309.35 403.10,309.35"/><polygon points="399.99,326.38 401.45,325.05 407.70,325.05 408.89,326.38 407.42,327.70 401.17,327.70"/><polygon points="401.56,308.35 402.74,309.68 402.18,315.07 400.71,316.40 399.53,315.07 400.09,309.68"/><polygon points="400.54,318.00 401.73,319.32 401.16,324.72 399.70,326.05 398.51,324.72 399.08,319.32"/><polygon points="411.11,308.35 412.29,309.68 411.73,315.07 410.26,316.40 409.08,315.07 409.64,309.68"/><polygon points="410.09,318.00 411.28,319.32 410.71,324.72 409.25,326.05 408.06,324.72 408.63,319.32"/><rect x="393.90" y="325.40" width="2.7" height="2.2" rx="0.4" fill="#226a22"/><polygon points="381.12,308.02 382.58,306.70 388.83,306.70 390.02,308.02 388.55,309.35 382.30,309.35"/><polygon points="379.19,326.38 380.65,325.05 386.90,325.05 388.09,326.38 386.62,327.70 380.37,327.70"/><polygon points="380.76,308.35 381.94,309.68 381.38,315.07 379.91,316.40 378.73,315.07 379.29,309.68"/><polygon points="379.74,318.00 380.93,319.32 380.36,324.72 378.90,326.05 377.71,324.72 378.28,319.32"/><polygon points="390.31,308.35 391.49,309.68 390.93,315.07 389.46,316.40 388.28,315.07 388.84,309.68"/><polygon points="389.29,318.00 390.48,319.32 389.91,324.72 388.45,326.05 387.26,324.72 387.83,319.32"/><polygon points="365.52,308.02 366.98,306.70 373.23,306.70 374.42,308.02 372.95,309.35 366.70,309.35"/><polygon points="363.59,326.38 365.05,325.05 371.30,325.05 372.49,326.38 371.02,327.70 364.77,327.70"/><polygon points="365.16,308.35 366.34,309.68 365.78,315.07 364.31,316.40 363.13,315.07 363.69,309.68"/><polygon points="364.14,318.00 365.33,319.32 364.76,324.72 363.30,326.05 362.11,324.72 362.68,319.32"/><polygon points="374.71,308.35 375.89,309.68 375.33,315.07 373.86,316.40 372.68,315.07 373.24,309.68"/><polygon points="373.69,318.00 374.88,319.32 374.31,324.72 372.85,326.05 371.66,324.72 372.23,319.32"/><polygon points="358.41,307.35 359.60,308.68 358.93,315.07 357.46,316.40 356.28,315.07 356.95,308.68"/><polygon points="357.29,318.00 358.48,319.32 357.81,325.72 356.34,327.05 355.16,325.72 355.83,319.32"/></g><g fill="#226a22"><polygon points="435.92,356.52 437.38,355.20 444.63,355.20 445.82,356.52 444.35,357.85 437.10,357.85"/><polygon points="433.99,374.88 435.45,373.55 442.70,373.55 443.89,374.88 442.43,376.20 435.18,376.20"/><polygon points="435.56,356.85 436.74,358.18 436.18,363.57 434.71,364.90 433.53,363.57 434.09,358.18"/><polygon points="434.54,366.50 435.73,367.82 435.16,373.22 433.70,374.55 432.51,373.22 433.08,367.82"/><polygon points="419.37,356.52 420.83,355.20 425.38,355.20 426.57,356.52 425.10,357.85 420.55,357.85"/><polygon points="418.59,363.88 420.06,362.55 424.61,362.55 425.79,363.88 424.33,365.20 419.78,365.20"/><polygon points="419.39,356.50 420.58,357.82 420.08,362.57 418.62,363.90 417.43,362.57 417.93,357.82"/><polygon points="426.54,356.50 427.73,357.82 427.23,362.57 425.77,363.90 424.58,362.57 425.08,357.82"/><polygon points="401.92,356.52 403.38,355.20 409.63,355.20 410.82,356.52 409.35,357.85 403.10,357.85"/><polygon points="399.99,374.88 401.45,373.55 407.70,373.55 408.89,374.88 407.42,376.20 401.17,376.20"/><polygon points="401.56,356.85 402.74,358.18 402.18,363.57 400.71,364.90 399.53,363.57 400.09,358.18"/><polygon points="400.54,366.50 401.73,367.82 401.16,373.22 399.70,374.55 398.51,373.22 399.08,367.82"/><polygon points="411.11,356.85 412.29,358.18 411.73,363.57 410.26,364.90 409.08,363.57 409.64,358.18"/><polygon points="410.09,366.50 411.28,367.82 410.71,373.22 409.25,374.55 408.06,373.22 408.63,367.82"/><rect x="393.90" y="373.90" width="2.7" height="2.2" rx="0.4" fill="#226a22"/><polygon points="389.61,355.85 390.80,357.18 390.13,363.57 388.66,364.90 387.48,363.57 388.15,357.18"/><polygon points="388.49,366.50 389.68,367.82 389.01,374.22 387.54,375.55 386.36,374.22 387.03,367.82"/><polygon points="365.52,356.52 366.98,355.20 373.23,355.20 374.42,356.52 372.95,357.85 366.70,357.85"/><polygon points="363.59,374.88 365.05,373.55 371.30,373.55 372.49,374.88 371.02,376.20 364.77,376.20"/><polygon points="365.16,356.85 366.34,358.18 365.78,363.57 364.31,364.90 363.13,363.57 363.69,358.18"/><polygon points="364.14,366.50 365.33,367.82 364.76,373.22 363.30,374.55 362.11,373.22 362.68,367.82"/><polygon points="374.71,356.85 375.89,358.18 375.33,363.57 373.86,364.90 372.68,363.57 373.24,358.18"/><polygon points="373.69,366.50 374.88,367.82 374.31,373.22 372.85,374.55 371.66,373.22 372.23,367.82"/><polygon points="358.41,355.85 359.60,357.18 358.93,363.57 357.46,364.90 356.28,363.57 356.95,357.18"/><polygon points="357.29,366.50 358.48,367.82 357.81,374.22 356.34,375.55 355.16,374.22 355.83,367.82"/></g><g fill="#226a22"><polygon points="435.92,405.02 437.38,403.70 444.63,403.70 445.82,405.02 444.35,406.35 437.10,406.35"/><polygon points="433.99,423.38 435.45,422.05 442.70,422.05 443.89,423.38 442.43,424.70 435.18,424.70"/><polygon points="435.56,405.35 436.74,406.68 436.18,412.07 434.71,413.40 433.53,412.07 434.09,406.68"/><polygon points="434.54,415.00 435.73,416.32 435.16,421.72 433.70,423.05 432.51,421.72 433.08,416.32"/><polygon points="419.37,405.02 420.83,403.70 425.38,403.70 426.57,405.02 425.10,406.35 420.55,406.35"/><polygon points="418.59,412.38 420.06,411.05 424.61,411.05 425.79,412.38 424.33,413.70 419.78,413.70"/><polygon points="419.39,405.00 420.58,406.32 420.08,411.07 418.62,412.40 417.43,411.07 417.93,406.32"/><polygon points="426.54,405.00 427.73,406.32 427.23,411.07 425.77,412.40 424.58,411.07 425.08,406.32"/><polygon points="401.92,405.02 403.38,403.70 410.63,403.70 411.82,405.02 410.35,406.35 403.10,406.35"/><polygon points="400.95,414.20 402.42,412.88 408.67,412.88 409.85,414.20 408.39,415.52 402.14,415.52"/><polygon points="398.99,423.38 400.45,422.05 407.70,422.05 408.89,423.38 407.42,424.70 400.17,424.70"/><polygon points="401.56,405.35 402.74,406.68 402.18,412.07 400.71,413.40 399.53,412.07 400.09,406.68"/><polygon points="410.09,415.00 411.28,416.32 410.71,421.72 409.25,423.05 408.06,421.72 408.63,416.32"/><rect x="393.90" y="422.40" width="2.7" height="2.2" rx="0.4" fill="#226a22"/><polygon points="381.12,405.02 382.58,403.70 389.83,403.70 391.02,405.02 389.55,406.35 382.30,406.35"/><polygon points="380.15,414.20 381.62,412.88 387.87,412.88 389.05,414.20 387.59,415.52 381.34,415.52"/><polygon points="378.19,423.38 379.65,422.05 386.90,422.05 388.09,423.38 386.62,424.70 379.37,424.70"/><polygon points="380.76,405.35 381.94,406.68 381.38,412.07 379.91,413.40 378.73,412.07 379.29,406.68"/><polygon points="389.29,415.00 390.48,416.32 389.91,421.72 388.45,423.05 387.26,421.72 387.83,416.32"/><polygon points="364.52,405.02 365.98,403.70 373.23,403.70 374.42,405.02 372.95,406.35 365.70,406.35"/><polygon points="374.71,405.35 375.89,406.68 375.33,412.07 373.86,413.40 372.68,412.07 373.24,406.68"/><polygon points="373.69,415.00 374.88,416.32 374.21,422.72 372.74,424.05 371.56,422.72 372.23,416.32"/></g><g fill="#226a22"><polygon points="645.26,113.35 646.45,114.67 645.78,121.08 644.31,122.40 643.13,121.08 643.80,114.67"/><polygon points="644.14,124.00 645.33,125.33 644.66,131.72 643.19,133.05 642.01,131.72 642.68,125.33"/><polygon points="654.81,113.35 656.00,114.67 655.33,121.08 653.86,122.40 652.68,121.08 653.35,114.67"/><polygon points="653.69,124.00 654.88,125.33 654.21,131.72 652.74,133.05 651.56,131.72 652.23,125.33"/><polygon points="644.61,114.83 648.05,122.83 650.15,121.77 646.71,113.77"/><polygon points="653.27,113.77 648.16,121.77 650.03,122.83 655.15,114.83"/><polygon points="630.02,114.03 631.48,112.70 637.73,112.70 638.92,114.03 637.45,115.35 631.20,115.35"/><polygon points="629.05,123.20 630.52,121.88 636.77,121.88 637.95,123.20 636.49,124.53 630.24,124.53"/><polygon points="629.66,114.35 630.84,115.67 630.28,121.08 628.81,122.40 627.63,121.08 628.19,115.67"/><polygon points="628.64,124.00 629.83,125.33 629.16,131.72 627.69,133.05 626.51,131.72 627.18,125.33"/><polygon points="639.21,114.35 640.39,115.67 639.83,121.08 638.36,122.40 637.18,121.08 637.74,115.67"/><polygon points="614.72,114.03 616.18,112.70 622.43,112.70 623.62,114.03 622.15,115.35 615.90,115.35"/><polygon points="613.75,123.20 615.22,121.88 621.47,121.88 622.65,123.20 621.19,124.53 614.94,124.53"/><polygon points="614.36,114.35 615.54,115.67 614.98,121.08 613.51,122.40 612.33,121.08 612.89,115.67"/><polygon points="613.34,124.00 614.53,125.33 613.86,131.72 612.39,133.05 611.21,131.72 611.88,125.33"/><polygon points="623.91,114.35 625.09,115.67 624.53,121.08 623.06,122.40 621.88,121.08 622.44,115.67"/><polygon points="617.07,125.55 620.64,133.13 622.96,131.87 619.38,124.30"/><polygon points="595.52,114.03 596.98,112.70 604.23,112.70 605.42,114.03 603.95,115.35 596.70,115.35"/><polygon points="594.55,123.20 596.02,121.88 603.27,121.88 604.45,123.20 602.99,124.53 595.74,124.53"/><polygon points="593.59,132.38 595.05,131.05 602.30,131.05 603.49,132.38 602.02,133.70 594.77,133.70"/><polygon points="605.71,114.35 606.89,115.67 606.33,121.08 604.86,122.40 603.68,121.08 604.24,115.67"/><polygon points="604.69,124.00 605.88,125.33 605.31,130.72 603.85,132.05 602.66,130.72 603.23,125.33"/><polygon points="579.92,114.03 581.38,112.70 588.63,112.70 589.82,114.03 588.35,115.35 581.10,115.35"/><polygon points="590.11,114.35 591.29,115.67 590.73,121.08 589.26,122.40 588.08,121.08 588.64,115.67"/><polygon points="589.09,124.00 590.28,125.33 589.61,131.72 588.14,133.05 586.96,131.72 587.63,125.33"/><polygon points="565.32,114.03 566.78,112.70 574.03,112.70 575.22,114.03 573.75,115.35 566.50,115.35"/><polygon points="564.35,123.20 565.82,121.88 572.07,121.88 573.25,123.20 571.79,124.53 565.54,124.53"/><polygon points="563.39,132.38 564.85,131.05 571.10,131.05 572.29,132.38 570.82,133.70 564.57,133.70"/><polygon points="564.96,114.35 566.14,115.67 565.58,121.08 564.11,122.40 562.93,121.08 563.49,115.67"/><polygon points="563.94,124.00 565.13,125.33 564.56,130.72 563.10,132.05 561.91,130.72 562.48,125.33"/><polygon points="573.49,124.00 574.68,125.33 574.11,130.72 572.65,132.05 571.46,130.72 572.03,125.33"/></g><g fill="#226a22"><polygon points="645.26,161.85 646.45,163.17 645.78,169.57 644.31,170.90 643.13,169.57 643.80,163.17"/><polygon points="644.14,172.50 645.33,173.82 644.66,180.22 643.19,181.55 642.01,180.22 642.68,173.82"/><polygon points="654.81,161.85 656.00,163.17 655.33,169.57 653.86,170.90 652.68,169.57 653.35,163.17"/><polygon points="653.69,172.50 654.88,173.82 654.21,180.22 652.74,181.55 651.56,180.22 652.23,173.82"/><polygon points="644.61,163.33 648.05,171.33 650.15,170.27 646.71,162.27"/><polygon points="653.27,162.27 648.16,170.27 650.03,171.33 655.15,163.33"/><polygon points="630.02,162.52 631.48,161.20 637.73,161.20 638.92,162.52 637.45,163.85 631.20,163.85"/><polygon points="629.05,171.70 630.52,170.38 636.77,170.38 637.95,171.70 636.49,173.02 630.24,173.02"/><polygon points="629.66,162.85 630.84,164.17 630.28,169.57 628.81,170.90 627.63,169.57 628.19,164.17"/><polygon points="628.64,172.50 629.83,173.82 629.16,180.22 627.69,181.55 626.51,180.22 627.18,173.82"/><polygon points="639.21,162.85 640.39,164.17 639.83,169.57 638.36,170.90 637.18,169.57 637.74,164.17"/><polygon points="614.72,162.52 616.18,161.20 622.43,161.20 623.62,162.52 622.15,163.85 615.90,163.85"/><polygon points="613.75,171.70 615.22,170.38 621.47,170.38 622.65,171.70 621.19,173.02 614.94,173.02"/><polygon points="614.36,162.85 615.54,164.17 614.98,169.57 613.51,170.90 612.33,169.57 612.89,164.17"/><polygon points="613.34,172.50 614.53,173.82 613.86,180.22 612.39,181.55 611.21,180.22 611.88,173.82"/><polygon points="623.91,162.85 625.09,164.17 624.53,169.57 623.06,170.90 621.88,169.57 622.44,164.17"/><polygon points="617.07,174.05 620.64,181.63 622.96,180.37 619.38,172.80"/><polygon points="596.52,162.52 597.98,161.20 605.23,161.20 606.42,162.52 604.95,163.85 597.70,163.85"/><polygon points="595.55,171.70 597.02,170.38 603.27,170.38 604.45,171.70 602.99,173.02 596.74,173.02"/><polygon points="594.59,180.88 596.05,179.55 602.30,179.55 603.49,180.88 602.02,182.20 595.77,182.20"/><polygon points="596.16,162.85 597.34,164.17 596.78,169.57 595.31,170.90 594.13,169.57 594.69,164.17"/><polygon points="595.14,172.50 596.33,173.82 595.76,179.22 594.30,180.55 593.11,179.22 593.68,173.82"/><polygon points="604.69,172.50 605.88,173.82 605.31,179.22 603.85,180.55 602.66,179.22 603.23,173.82"/><polygon points="580.92,162.52 582.38,161.20 589.63,161.20 590.82,162.52 589.35,163.85 582.10,163.85"/><polygon points="579.95,171.70 581.42,170.38 587.67,170.38 588.85,171.70 587.39,173.02 581.14,173.02"/><polygon points="577.99,180.88 579.45,179.55 586.70,179.55 587.89,180.88 586.42,182.20 579.17,182.20"/><polygon points="580.56,162.85 581.74,164.17 581.18,169.57 579.71,170.90 578.53,169.57 579.09,164.17"/><polygon points="589.09,172.50 590.28,173.82 589.71,179.22 588.25,180.55 587.06,179.22 587.63,173.82"/><polygon points="573.81,161.85 575.00,163.17 574.33,169.57 572.86,170.90 571.68,169.57 572.35,163.17"/><polygon points="572.69,172.50 573.88,173.82 573.21,180.22 571.74,181.55 570.56,180.22 571.23,173.82"/><polygon points="558.21,161.85 559.40,163.17 558.73,169.57 557.26,170.90 556.08,169.57 556.75,163.17"/><polygon points="557.09,172.50 558.28,173.82 557.61,180.22 556.14,181.55 554.96,180.22 555.63,173.82"/></g><g fill="#226a22"><polygon points="645.26,210.35 646.45,211.67 645.78,218.07 644.31,219.40 643.13,218.07 643.80,211.67"/><polygon points="644.14,221.00 645.33,222.32 644.66,228.72 643.19,230.05 642.01,228.72 642.68,222.32"/><polygon points="654.81,210.35 656.00,211.67 655.33,218.07 653.86,219.40 652.68,218.07 653.35,211.67"/><polygon points="653.69,221.00 654.88,222.32 654.21,228.72 652.74,230.05 651.56,228.72 652.23,222.32"/><polygon points="644.61,211.83 648.05,219.83 650.15,218.77 646.71,210.77"/><polygon points="653.27,210.77 648.16,218.77 650.03,219.83 655.15,211.83"/><polygon points="630.02,211.02 631.48,209.70 637.73,209.70 638.92,211.02 637.45,212.35 631.20,212.35"/><polygon points="629.05,220.20 630.52,218.88 636.77,218.88 637.95,220.20 636.49,221.52 630.24,221.52"/><polygon points="629.66,211.35 630.84,212.67 630.28,218.07 628.81,219.40 627.63,218.07 628.19,212.67"/><polygon points="628.64,221.00 629.83,222.32 629.16,228.72 627.69,230.05 626.51,228.72 627.18,222.32"/><polygon points="639.21,211.35 640.39,212.67 639.83,218.07 638.36,219.40 637.18,218.07 637.74,212.67"/><polygon points="614.72,211.02 616.18,209.70 622.43,209.70 623.62,211.02 622.15,212.35 615.90,212.35"/><polygon points="613.75,220.20 615.22,218.88 621.47,218.88 622.65,220.20 621.19,221.52 614.94,221.52"/><polygon points="614.36,211.35 615.54,212.67 614.98,218.07 613.51,219.40 612.33,218.07 612.89,212.67"/><polygon points="613.34,221.00 614.53,222.32 613.86,228.72 612.39,230.05 611.21,228.72 611.88,222.32"/><polygon points="623.91,211.35 625.09,212.67 624.53,218.07 623.06,219.40 621.88,218.07 622.44,212.67"/><polygon points="617.07,222.55 620.64,230.13 622.96,228.87 619.38,221.30"/><polygon points="595.52,211.02 596.98,209.70 604.23,209.70 605.42,211.02 603.95,212.35 596.70,212.35"/><polygon points="595.55,220.20 597.02,218.88 603.27,218.88 604.45,220.20 602.99,221.52 596.74,221.52"/><polygon points="594.59,229.38 596.05,228.05 603.30,228.05 604.49,229.38 603.02,230.70 595.77,230.70"/><polygon points="595.14,221.00 596.33,222.32 595.76,227.72 594.30,229.05 593.11,227.72 593.68,222.32"/><polygon points="605.71,211.35 606.89,212.67 606.33,218.07 604.86,219.40 603.68,218.07 604.24,212.67"/><polygon points="580.92,211.02 582.38,209.70 588.63,209.70 589.82,211.02 588.35,212.35 582.10,212.35"/><polygon points="579.95,220.20 581.42,218.88 587.67,218.88 588.85,220.20 587.39,221.52 581.14,221.52"/><polygon points="577.99,229.38 579.45,228.05 586.70,228.05 587.89,229.38 586.42,230.70 579.17,230.70"/><polygon points="580.56,211.35 581.74,212.67 581.18,218.07 579.71,219.40 578.53,218.07 579.09,212.67"/><polygon points="590.11,211.35 591.29,212.67 590.73,218.07 589.26,219.40 588.08,218.07 588.64,212.67"/><polygon points="589.09,221.00 590.28,222.32 589.71,227.72 588.25,229.05 587.06,227.72 587.63,222.32"/><polygon points="565.32,211.02 566.78,209.70 574.03,209.70 575.22,211.02 573.75,212.35 566.50,212.35"/><polygon points="564.35,220.20 565.82,218.88 572.07,218.88 573.25,220.20 571.79,221.52 565.54,221.52"/><polygon points="563.39,229.38 564.85,228.05 571.10,228.05 572.29,229.38 570.82,230.70 564.57,230.70"/><polygon points="564.96,211.35 566.14,212.67 565.58,218.07 564.11,219.40 562.93,218.07 563.49,212.67"/><polygon points="563.94,221.00 565.13,222.32 564.56,227.72 563.10,229.05 561.91,227.72 562.48,222.32"/><polygon points="573.49,221.00 574.68,222.32 574.11,227.72 572.65,229.05 571.46,227.72 572.03,222.32"/></g></svg>
  </div>
 </div>
</div>
<div style="position:absolute;left:136px;top:66px;width:554px;height:345px;border:1px solid #a8a8a5;"></div>
<svg style="position:absolute;left:137px;top:411px" width="554" height="1"><line x1="0" y1="0.5" x2="554" y2="0.5" stroke="#cfcfcd" stroke-width="1" stroke-dasharray="4.1 4.547" stroke-dashoffset="3.447"/></svg>
<div class="bottom"></div>
</body></html>
